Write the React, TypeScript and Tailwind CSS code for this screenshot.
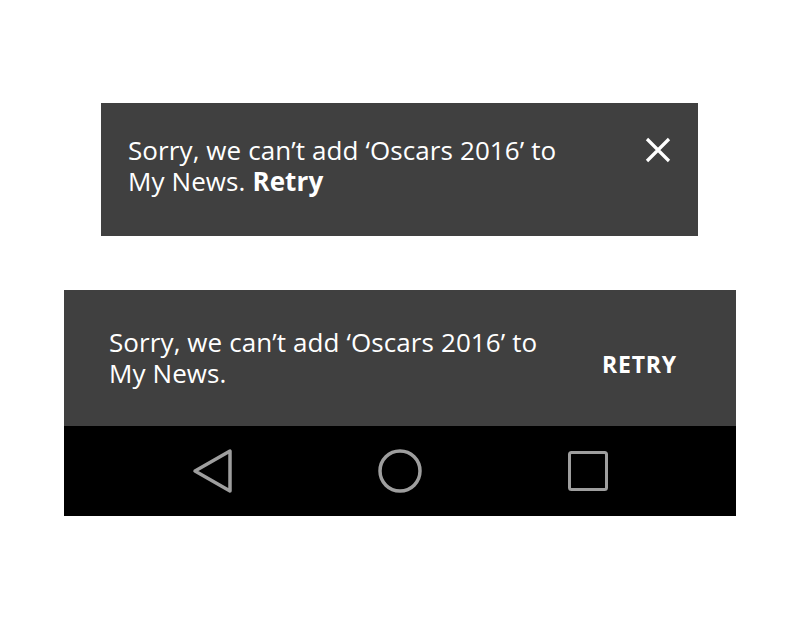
export default function App() {
  return (
    <div
      className="w-[800px] h-[621px] bg-white flex flex-col"
      style={{ fontFamily: '"Open Sans", "Noto Sans", sans-serif' }}
    >
      {/* Toast with close button */}
      <div className="ml-[101px] mt-[103px] w-[597px] h-[133px] bg-[#404040] flex items-start pl-[27px] pr-[27px] pt-[32px]">
        <p className="flex-1 text-white text-[26px] leading-[31px] tracking-[0.1px]">
          Sorry, we can’t add ‘Oscars 2016’ to
          <br />
          My News. <span className="font-bold">Retry</span>
        </p>
        <svg width="26" height="26" viewBox="0 0 26 26" className="mt-[2px]" fill="none">
          <path d="M2 2 L24 24 M24 2 L2 24" stroke="white" strokeWidth="3.2" />
        </svg>
      </div>

      {/* Snackbar + nav bar */}
      <div className="ml-[64px] mt-[54px] w-[672px] flex flex-col">
        <div className="h-[136px] bg-[#404040] flex items-center pl-[45px] pr-[59px]">
          <p className="flex-1 text-white text-[26px] leading-[31px] tracking-[0.1px]">
            Sorry, we can’t add ‘Oscars 2016’ to
            <br />
            My News.
          </p>
          <span className="text-white font-bold text-[23px] tracking-[0.8px] mt-[12px]">RETRY</span>
        </div>
        <div className="h-[90px] bg-black flex items-center justify-center gap-[144px]">
          <svg width="44" height="48" viewBox="0 0 44 48" fill="none">
            <path d="M40 4 L40 44 L5 24 Z" stroke="#9e9e9e" strokeWidth="3.5" strokeLinejoin="round" />
          </svg>
          <svg width="44" height="48" viewBox="0 0 44 48" fill="none">
            <circle cx="22" cy="24" r="20" stroke="#9e9e9e" strokeWidth="3.5" />
          </svg>
          <svg width="44" height="44" viewBox="0 0 44 44" fill="none">
            <rect x="3.5" y="3.5" width="37" height="37" rx="2" stroke="#9e9e9e" strokeWidth="3" />
          </svg>
        </div>
      </div>
    </div>
  );
}
